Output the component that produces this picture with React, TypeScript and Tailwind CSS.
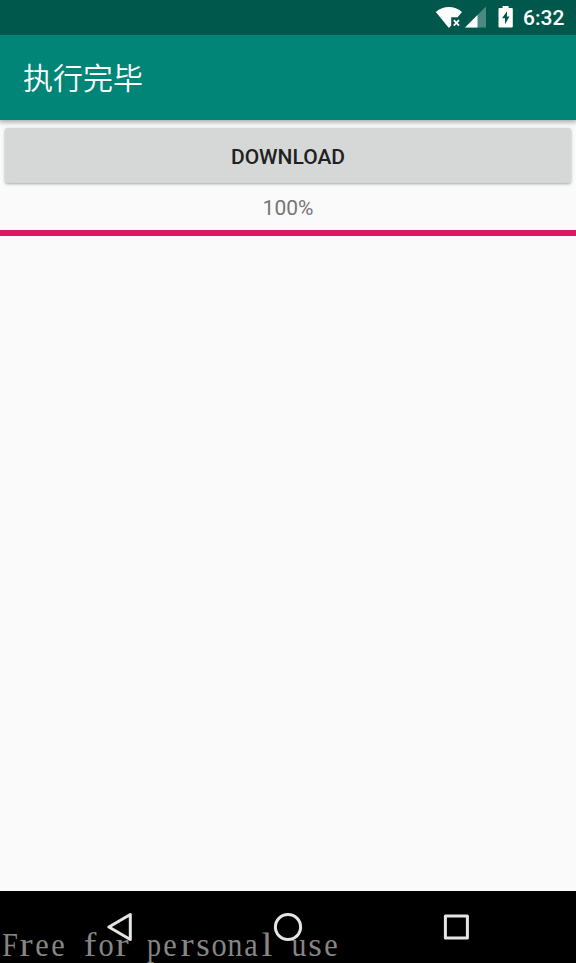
function StatusIcons() {
  return (
    <div className="relative z-10 flex h-[35px] items-center justify-end bg-[#00574b] pr-[11px] text-white">
      <svg className="mr-[3px]" width="27" height="35" viewBox="0 0 27 35" fill="currentColor">
        <path d="M.8 11.9C8.3 5.4 19.6 5.4 27 11.9L22.6 17.2H16.2V25.5L13.9 28Z" />
        <path d="M18.8 20.2L24 25.6M24 20.2L18.8 25.6" stroke="currentColor" strokeWidth="1.8" />
      </svg>
      <svg className="mr-[12px]" width="21" height="35" viewBox="0 0 21 35" fill="currentColor">
        <path d="M0 27.5L21 6.5V27.5Z" fillOpacity=".3" />
        <path d="M0 27.5L12.5 15V27.5Z" />
      </svg>
      <svg className="mr-[10px]" width="15" height="35" viewBox="0 0 15 35" fill="currentColor">
        <path fillRule="evenodd" d="M1.5 8H4.6V6H10.6V8H13.8Q14.8 8 14.8 9V26.5Q14.8 27.5 13.8 27.5H1.5Q.5 27.5 .5 26.5V9Q.5 8 1.5 8ZM9 11.2L4 18.2H7V24.2L11.4 16.6H9Z" />
      </svg>
      <span className="w-[42px] whitespace-nowrap pt-[2px] text-[21px] leading-[35px] font-medium">6:32</span>
    </div>
  );
}

// Narrow and wide letters are evened out so that each fills its fixed cell.
const letterScale: Record<string, string> = {
  F: "scale-x-[0.85]",
  r: "scale-x-[1.2]",
  f: "scale-x-[1.15]",
  l: "scale-x-[1.2]",
  s: "scale-x-[1.05]",
  u: "scale-x-[0.9]",
  n: "scale-x-[0.9]",
  p: "scale-x-[0.85]",
};

function Watermark({ text }: { text: string }) {
  return (
    <div className="absolute left-[2px] top-[35px] flex whitespace-pre font-['Liberation_Serif',serif] text-[33px] leading-[38px] text-[#868686]">
      {Array.from(text).map((char, index) => (
        <span key={index} className={`flex w-[16.05px] justify-center ${letterScale[char] ?? "scale-x-[0.92]"}`}>
          {char}
        </span>
      ))}
    </div>
  );
}

function NavigationBar() {
  return (
    <nav className="relative flex h-[72px] justify-between bg-black px-[107px] text-[#e5e5e5]">
      <svg width="26" height="72" viewBox="0 0 26 72" fill="none" stroke="currentColor" strokeWidth="3" strokeLinejoin="round">
        <path d="M1.9 36L23.3 23.5V48.5Z" />
      </svg>
      <svg width="30" height="72" viewBox="0 0 30 72" fill="none" stroke="currentColor" strokeWidth="3">
        <circle cx="15" cy="36" r="12.6" />
      </svg>
      <svg width="26" height="72" viewBox="0 0 26 72" fill="none" stroke="currentColor" strokeWidth="3" strokeLinejoin="round">
        <rect x="2.4" y="25" width="22" height="22" />
      </svg>
      <Watermark text="Free for personal use" />
    </nav>
  );
}

export default function App() {
  return (
    <div className="flex h-[963px] w-[576px] flex-col overflow-hidden bg-[#fafafa] font-[Roboto,sans-serif]">
      <StatusIcons />
      <header className="flex h-[84.5px] items-center bg-[#008577] pb-[2px] pl-[23px] shadow-[0_1px_5px_1px_rgba(0,0,0,0.35)]">
        <h1 className="font-['Noto_Sans_CJK_SC',sans-serif] text-[30px] leading-[40px] font-[350] text-white">执行完毕</h1>
      </header>
      <main className="flex flex-1 flex-col pt-[8px]">
        <button className="mx-[5px] h-[55.5px] shrink-0 rounded-[3px] bg-[#d6d7d7] pt-[4px] text-[21px] font-medium text-[#212121] shadow-[0_1px_3px_rgba(0,0,0,0.35)]">
          DOWNLOAD
        </button>
        <p className="mt-[12.6px] text-center text-[21px] leading-[25px] text-[#757575]">100%</p>
        <div className="mt-[9px] h-[6px] bg-[#d81b60]" />
      </main>
      <NavigationBar />
    </div>
  );
}
